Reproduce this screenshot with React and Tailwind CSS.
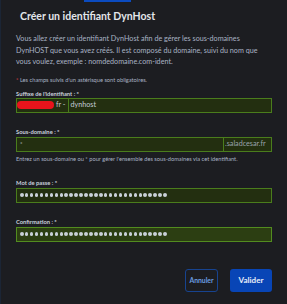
const Dots = () => (
  <div className="flex items-center gap-[1.45px]">
    {Array.from({ length: 30 }).map((_, i) => (
      <span key={i} className="block w-[3.5px] h-[3.5px] rounded-full bg-[#c9d0d8]" />
    ))}
  </div>
);

export default function App() {
  return (
    <div className="w-[287px] h-[304px] overflow-hidden bg-[#1c1d21] border-l border-[#1b2535] text-[#b4bccb]" style={{ fontFamily: 'Lato, "Open Sans", sans-serif' }}>
      <div className="ml-[83px] w-[47px] h-[2px] bg-[#0b4bbf]" />
      <div className="pl-[15px] pr-[15px]">
        <h2 className="mt-[7px] ml-[4px] text-[10.5px] leading-[15px] font-bold text-[#e3e6ea]">Créer un identifiant DynHost</h2>
        <p className="mt-[9px] text-[7.2px] leading-[11.5px] text-[#a9b3c4] whitespace-nowrap">
          Vous allez créer un identifiant DynHost afin de gérer les sous-domaines<br />
          DynHOST que vous avez créés. Il est composé du domaine, suivi du nom que<br />
          vous voulez, exemple : nomdedomaine.com-ident.
        </p>
        <p className="mt-[8px] text-[5.7px] leading-[8px] text-[#a9b3c4]"><span className="text-[#e04545]">*</span> Les champs suivis d'un astérisque sont obligatoires.</p>

        <label className="block mt-[6px] text-[5.8px] leading-[8px] font-bold text-[#c9d0dc]">Suffixe de l'identifiant : *</label>
        <div className="flex h-[15px] border border-[#4a7d1c] bg-[#232f10] text-[7.2px] text-[#c4ccd6]">
          <div className="flex items-center pr-[2px]">
            <span className="w-[37px] h-[8px] rounded-full bg-[#e8141c] mr-[2px]" />
            <span>fr -</span>
          </div>
          <div className="flex items-center border-l border-[#4a7d1c] pl-[2px]">dynhost</div>
        </div>

        <label className="block mt-[15px] text-[5.8px] leading-[8px] font-bold text-[#c9d0dc]">Sous-domaine : *</label>
        <div className="mt-[1px] flex h-[15px] border border-[#4a7d1c] bg-[#232f10] text-[7.2px] text-[#c4ccd6]">
          <div className="flex-1 pl-[3px] pt-[1px] text-[6px]">*</div>
          <div className="w-[48px] flex items-center border-l border-[#4a7d1c] pl-[1px] text-[#9aa3ad]">.saladcesar.fr</div>
        </div>
        <p className="mt-[3px] text-[5.7px] leading-[8px] text-[#a9b3c4] whitespace-nowrap">Entrez un sous-domaine ou * pour gérer l'ensemble des sous-domaines via cet identifiant.</p>

        <label className="block mt-[16px] text-[5.8px] leading-[8px] font-bold text-[#c9d0dc]">Mot de passe : *</label>
        <div className="mt-[1px] flex items-center h-[15px] border border-[#4a7d1c] bg-[#232f10] pl-[3px]">
          <Dots />
        </div>

        <label className="block mt-[15px] text-[5.8px] leading-[8px] font-bold text-[#c9d0dc]">Confirmation : *</label>
        <div className="mt-[1px] flex items-center h-[15px] border border-[#528c1f] bg-[#2c3e12] pl-[3px]">
          <Dots />
        </div>

        <div className="mt-[27px] flex justify-end gap-[12px]">
          <button className="w-[33px] h-[23px] rounded-[3px] border border-[#17438f] text-[6.8px] font-bold text-[#6b9ee0]">Annuler</button>
          <button className="w-[42px] h-[23px] rounded-[3px] bg-[#0845b6] text-[8px] font-bold text-[#e8eef8]">Valider</button>
        </div>
      </div>
    </div>
  );
}
